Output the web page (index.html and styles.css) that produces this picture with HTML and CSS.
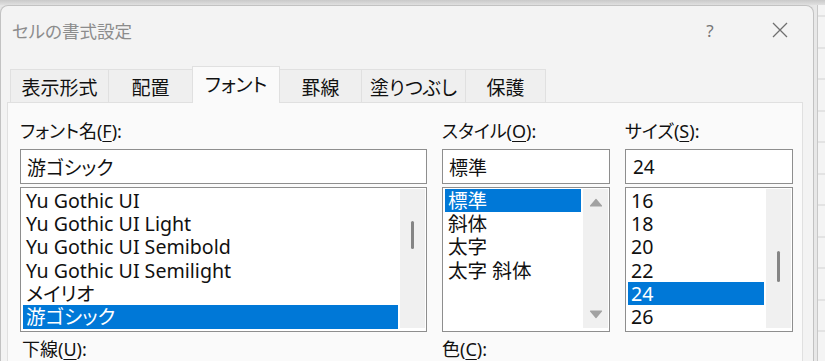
FILE: index.html
```html
<!DOCTYPE html>
<html lang="ja">
<head>
<meta charset="utf-8">
<title>セルの書式設定</title>
<link rel="stylesheet" href="styles.css">
</head>
<body>
<div class="screen">
  <div class="dialog">
    <div class="titlebar">
      <span class="title">セルの書式設定</span>
      <span class="help">?</span>
      <span class="close">
        <svg width="16" height="16" viewBox="0 0 16 16"><path d="M1 1 L15 15 M15 1 L1 15" stroke="#6f6f6f" stroke-width="1.3" fill="none"/></svg>
      </span>
    </div>
    <div class="tabs">
      <div class="tab t1">表示形式</div>
      <div class="tab t2">配置</div>
      <div class="tab t3 active">フォント</div>
      <div class="tab t4">罫線</div>
      <div class="tab t5">塗りつぶし</div>
      <div class="tab t6">保護</div>
    </div>
    <div class="panel">
      <div class="cols">
        <div class="col">
          <div class="label">フォント名(<u>F</u>):</div>
          <div class="input">游ゴシック</div>
          <div class="list">
            <div class="items">
              <div class="item">Yu Gothic UI</div>
              <div class="item">Yu Gothic UI Light</div>
              <div class="item">Yu Gothic UI Semibold</div>
              <div class="item">Yu Gothic UI Semilight</div>
              <div class="item">メイリオ</div>
              <div class="item sel">游ゴシック</div>
            </div>
            <div class="scroll"><div class="thumb thumb-font"></div></div>
          </div>
        </div>
        <div class="col">
          <div class="label">スタイル(<u>O</u>):</div>
          <div class="input">標準</div>
          <div class="list">
            <div class="items">
              <div class="item sel">標準</div>
              <div class="item">斜体</div>
              <div class="item">太字</div>
              <div class="item">太字 斜体</div>
            </div>
            <div class="scroll scroll-arrows">
              <svg width="14" height="9" viewBox="0 0 14 9"><path d="M1.5 8 L7 1.5 L12.5 8 Z" fill="#a2a2a2" stroke="#a2a2a2" stroke-width="1.2" stroke-linejoin="round"/></svg>
              <svg width="14" height="9" viewBox="0 0 14 9"><path d="M1.5 1 L7 7.5 L12.5 1 Z" fill="#a2a2a2" stroke="#a2a2a2" stroke-width="1.2" stroke-linejoin="round"/></svg>
            </div>
          </div>
        </div>
        <div class="col">
          <div class="label">サイズ(<u>S</u>):</div>
          <div class="input input-size">24</div>
          <div class="list">
            <div class="items">
              <div class="item">16</div>
              <div class="item">18</div>
              <div class="item">20</div>
              <div class="item">22</div>
              <div class="item sel">24</div>
              <div class="item">26</div>
            </div>
            <div class="scroll"><div class="thumb thumb-size"></div></div>
          </div>
        </div>
      </div>
      <div class="bottom">
        <div class="label">下線(<u>U</u>):</div>
        <div class="label">色(<u>C</u>):</div>
      </div>
    </div>
  </div>
  <div class="sheet"></div>
</div>
</body>
</html>
```
FILE: styles.css
```css
html, body {
  margin: 0;
  padding: 0;
}
body {
  width: 825px;
  height: 361px;
  overflow: hidden;
  background: linear-gradient(#c9c9c9, #e0e0e0 5px, #e6e6e6 5px);
  font-family: "Noto Sans", "Noto Sans CJK JP", sans-serif;
  font-feature-settings: "palt";
  color: #111;
}
.screen {
  display: flex;
  height: 361px;
  overflow: hidden;
}
.dialog {
  width: 814px;
  flex: none;
  margin-top: 5px;
  box-sizing: border-box;
  background: #f3f3f3;
  border: 1px solid #c2c2c2;
  border-bottom: none;
  border-radius: 8px 8px 0 0;
  display: flex;
  flex-direction: column;
  overflow: hidden;
}
.titlebar {
  flex: none;
  height: 48px;
  display: flex;
  align-items: center;
  padding-left: 11px;
}
.title {
  font-size: 17.5px;
  color: #8c8c8c;
}
.help {
  margin-left: auto;
  width: 16px;
  text-align: center;
  font-size: 17px;
  color: #767676;
}
.close {
  width: 16px;
  height: 16px;
  margin-left: 54px;
  margin-right: 25px;
  display: flex;
}
.tabs {
  flex: none;
  display: flex;
  align-items: flex-end;
  height: 36px;
  margin-top: 13px;
  padding-left: 9px;
  margin-bottom: -1px;
}
.tab {
  height: 34px;
  box-sizing: border-box;
  border: 1px solid #e0e0e0;
  border-bottom: none;
  background: #efefef;
  display: flex;
  align-items: center;
  justify-content: center;
  font-size: 19px;
  margin-right: -1px;
}
.tab.active {
  height: 37px;
  background: #fafafa;
  position: relative;
  z-index: 1;
  padding-bottom: 2px;
}
.t1 { width: 99px; }
.t2 { width: 85px; }
.t3 { width: 88px; }
.t4 { width: 83px; }
.t5 { width: 105px; }
.t6 { width: 81px; }
.panel {
  flex: none;
  margin: 0 10px 0 6px;
  background: #fafafa;
  border: 1px solid #e0e0e0;
  border-bottom: none;
  padding: 16px 0 20px 12px;
}
.cols, .bottom {
  display: grid;
  grid-template-columns: 407px 168px 168px;
  column-gap: 15px;
}
.bottom {
  margin-top: 5px;
}
.bottom .label:first-child {
  padding-left: 2px;
}
.label {
  font-size: 18px;
  line-height: 24px;
  height: 24px;
  margin-bottom: 6px;
  white-space: nowrap;
}
.label u {
  text-underline-offset: 3px;
  text-decoration-thickness: 1px;
}
.input {
  height: 35px;
  box-sizing: border-box;
  border: 1px solid #8e8e8e;
  background: #fff;
  font-size: 19px;
  padding-left: 6px;
  display: flex;
  align-items: center;
  margin-bottom: 3px;
}
.input-size {
  padding-left: 7px;
}
.list {
  height: 145px;
  box-sizing: border-box;
  border: 1px solid #8e8e8e;
  background: #fff;
  display: flex;
}
.items {
  flex: 1;
  padding: 0.5px 2px 0 2px;
}
.item {
  height: 23.4px;
  line-height: 23.4px;
  padding-left: 3px;
  font-size: 19.6px;
  white-space: nowrap;
}
.item.sel {
  background: #0078d7;
  color: #fff;
}
.scroll {
  width: 25px;
  margin: 1px 1px 3px 0;
  background: #f0f0f0;
  display: flex;
  flex-direction: column;
  align-items: center;
}
.scroll-arrows {
  justify-content: space-between;
  padding: 9px 0;
  box-sizing: border-box;
}
.thumb {
  width: 3px;
  border-radius: 2px;
  background: #858585;
}
.thumb-font {
  margin-top: 32px;
  height: 28px;
}
.thumb-size {
  margin-top: 62px;
  height: 31px;
}
.sheet {
  flex: 1;
  margin-top: 5px;
  background:
    linear-gradient(to right, #e8e8e8 0 3px, #c8c8c8 3px 4px, transparent 4px),
    repeating-linear-gradient(to bottom, #f4f4f4 0 30.5px, #d2d2d2 30.5px 31.5px);
  background-position: 0 0, 0 -19.5px;
}
```
